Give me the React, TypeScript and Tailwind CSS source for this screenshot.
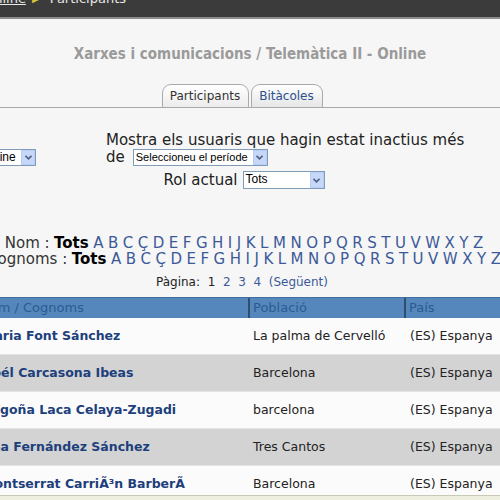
import React from 'react';

const letters = ['A','B','C','Ç','D','E','F','G','H','I','J','K','L','M','N','O','P','Q','R','S','T','U','V','W','X','Y','Z'];

const rows = [
  { name: 'Maria Font Sánchez', city: 'La palma de Cervelló', alt: false },
  { name: 'Noél Carcasona Ibeas', city: 'Barcelona', alt: true },
  { name: 'Begoña Laca Celaya-Zugadi', city: 'barcelona', alt: false },
  { name: 'Ana Fernández Sánchez', city: 'Tres Cantos', alt: true },
  { name: 'Montserrat CarriÃ³n BarberÃ', city: 'Barcelona', alt: false },
];

function Select({ label, className, textClass = 'text-[11px]' }: { label: string; className: string; textClass?: string }) {
  return (
    <div className={`flex h-[17px] items-stretch border border-[#7f9db9] bg-white ${className}`}>
      <span className={`flex-1 overflow-hidden whitespace-nowrap pl-[2px] leading-[15px] text-black font-['Liberation_Sans',sans-serif] ${textClass}`}>{label}</span>
      <span className="flex w-[14px] items-center justify-center border border-[#b9cdf6] bg-[#c7d7f8]">
        <svg width="7" height="5" viewBox="0 0 7 5"><path d="M0.5 0.8 L3.5 3.8 L6.5 0.8" fill="none" stroke="#4d6185" strokeWidth="1.6" /></svg>
      </span>
    </div>
  );
}

function AlphaRow({ label }: { label: string }) {
  return (
    <div className="flex gap-[4.5px] whitespace-nowrap text-[15px] leading-[16px] text-[#333]">
      <span>{label} :</span>
      <b className="text-black">Tots</b>
      {letters.map((l) => (
        <span key={l} className="text-[#3c5a99]">{l}</span>
      ))}
    </div>
  );
}

export default function App() {
  return (
    <div className="relative h-[500px] w-[500px] overflow-hidden bg-[#f6f6f6] font-['DejaVu_Sans',sans-serif]">
      {/* breadcrumb bar */}
      <div className="h-[19px] overflow-hidden border-b-2 border-[#8c8c8c] bg-[#3b3b3b]">
        <div className="-mt-[9px] flex items-center gap-[6px] whitespace-nowrap text-[13px] leading-[16px] text-[#e8e8e8]">
          <span className="-ml-[16px] underline">Online</span>
          <span className="text-[10px] text-[#d8c23a]">▶</span>
          <span className="ml-[4px]">Participants</span>
        </div>
      </div>

      <h1 className="mt-[25px] text-center text-[15px] font-bold leading-[20px] text-[#9a9a9a] font-['DejaVu_Sans_Condensed',sans-serif]">
        Xarxes i comunicacions / Telemàtica II - Online
      </h1>

      {/* tabs */}
      <div className="mt-[20px] flex justify-center border-b border-[#a9a9a9] pr-[16px]">
        <div className="flex items-end gap-[2px]">
          <div className="-mb-px flex h-[24px] w-[87px] items-center justify-center rounded-t-[9px] border border-[#a9a9a9] bg-gradient-to-b from-white to-[#ececec] text-[12px] text-[#333]">
            Participants
          </div>
          <div className="flex h-[23px] w-[72px] items-center justify-center rounded-t-[9px] border border-b-0 border-[#a9a9a9] bg-gradient-to-b from-white to-[#e6e6e6] text-[12px] text-[#2b4f8f]">
            Bitàcoles
          </div>
        </div>
      </div>

      {/* filters */}
      <div className="mt-[24px] flex items-start">
        <Select label="Online" className="-ml-[22px] mt-[17px] w-[58px]" textClass="text-[12px]" />
        <div className="ml-[70px] w-[360px] text-[15px] leading-[17px] text-[#222]">
          <div>Mostra els usuaris que hagin estat inactius més</div>
          <div className="flex items-center gap-[8px]">
            <span>de</span>
            <Select label="Seleccioneu el període" className="w-[135px]" />
          </div>
        </div>
      </div>
      <div className="mt-[5px] flex items-center justify-center gap-[5px] pr-[12px] text-[15px] leading-[18px] text-[#222]">
        <span>Rol actual</span>
        <Select label="Tots" className="h-[18px] w-[82px]" textClass="text-[12px]" />
      </div>

      {/* alphabet */}
      <div className="mt-[46px] flex flex-col items-center pr-[12px]">
        <AlphaRow label="Nom" />
        <AlphaRow label="Cognoms" />
      </div>

      <div className="mt-[7px] flex justify-center pr-[16px] text-[12px] leading-[16px] text-[#222]">
        <span>Pàgina:&nbsp; 1&nbsp; <span className="text-[#3c5a99]">2&nbsp; 3&nbsp; 4&nbsp; (Següent)</span></span>
      </div>

      {/* table */}
      <div className="-ml-[24px] mt-[7px] w-[560px]">
        <div className="flex h-[21px] border-t border-[#3f6f9f] bg-[#5587bd] text-[13px] leading-[20px] text-[#2c5b91]">
          <div className="w-[274px] border-r-2 border-[#2e4e70] pl-[4px]">Nom / Cognoms</div>
          <div className="w-[156px] border-r-2 border-[#2e4e70] pl-[3px]">Població</div>
          <div className="flex-1 pl-[3px]">País</div>
        </div>
        {rows.map((r) => (
          <div
            key={r.name}
            className={`flex h-[37px] items-center border-b border-[#e4e4e4] text-[12.5px] ${r.alt ? 'bg-[#d3d3d3]' : 'bg-[#fbfbfb]'}`}
          >
            <div className="w-[274px] pl-[6px] font-bold text-[#1d3f7c]">{r.name}</div>
            <div className="w-[156px] pl-[3px] text-[#222]">{r.city}</div>
            <div className="flex-1 pl-[4px] text-[#222]">(ES) Espanya</div>
          </div>
        ))}
      </div>

      {/* status strip overlaying the page bottom */}
      <div className="absolute bottom-0 left-0 h-[5px] w-full border-t border-[#c9c9b8] bg-[#efefdf]" />
    </div>
  );
}
